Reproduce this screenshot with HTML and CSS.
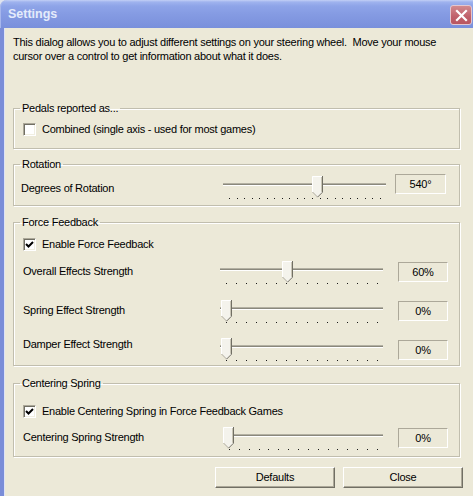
FILE: index.html
```html
<!DOCTYPE html>
<html>
<head>
<meta charset="utf-8">
<title>Settings</title>
<link rel="stylesheet" href="styles.css">
</head>
<body>
<div class="window">
  <div class="titlebar">
    <span class="title">Settings</span>
    <button class="close-btn" aria-label="Close">
      <svg width="13" height="13" viewBox="0 0 13 13"><path d="M2 2 L11 11 M11 2 L2 11" stroke="#fff" stroke-width="2.2" stroke-linecap="square"/></svg>
    </button>
  </div>
  <div class="client">
    <p class="intro">This dialog allows you to adjust different settings on your steering wheel.&nbsp; Move your mouse<br>cursor over a control to get information about what it does.</p>

    <fieldset class="group group-pedals">
      <legend>Pedals reported as...</legend>
      <div class="group-body">
        <label class="check-row"><span class="checkbox"></span>Combined (single axis - used for most games)</label>
      </div>
    </fieldset>

    <fieldset class="group group-rotation">
      <legend>Rotation</legend>
      <div class="group-body">
        <div class="slider-row slider-row-wide">
          <span class="row-label row-label-low">Degrees of Rotation</span>
          <div class="slider">
            <div class="track"></div>
            <div class="ticks"><i></i><i></i><i></i><i></i><i></i><i></i><i></i><i></i><i></i><i></i><i></i><i></i><i></i><i></i><i></i><i></i><i></i><i></i><i></i><i></i><i></i></div>
            <svg class="thumb" style="left:89px" width="11" height="22" viewBox="0 0 11 22"><polygon points="0,0 11,0 11,16 5.5,21.5 0,16" fill="#f4f3ec"/><polyline points="0.5,16 0.5,0.5 10,0.5" fill="none" stroke="#fff"/><polyline points="0.5,16 5.5,21" fill="none" stroke="#aca899"/><polyline points="10.5,0 10.5,16.2 5.5,21.2" fill="none" stroke="#716f64"/><polyline points="9.5,1 9.5,15.8" fill="none" stroke="#c9c6b6"/></svg>
          </div>
          <span class="value">540°</span>
        </div>
      </div>
    </fieldset>

    <fieldset class="group group-ff">
      <legend>Force Feedback</legend>
      <div class="group-body">
        <label class="check-row"><span class="checkbox checked"><svg width="11" height="11" viewBox="0 0 11 11"><polyline points="2,5 4.5,7.5 9,3" fill="none" stroke="#000" stroke-width="2"/></svg></span>Enable Force Feedback</label>

        <div class="slider-row row-overall">
          <span class="row-label">Overall Effects Strength</span>
          <div class="slider">
            <div class="track"></div>
            <div class="ticks"><i></i><i></i><i></i><i></i><i></i><i></i><i></i><i></i><i></i><i></i><i></i><i></i><i></i><i></i><i></i><i></i></div>
            <svg class="thumb" style="left:62px" width="11" height="22" viewBox="0 0 11 22"><polygon points="0,0 11,0 11,16 5.5,21.5 0,16" fill="#f4f3ec"/><polyline points="0.5,16 0.5,0.5 10,0.5" fill="none" stroke="#fff"/><polyline points="0.5,16 5.5,21" fill="none" stroke="#aca899"/><polyline points="10.5,0 10.5,16.2 5.5,21.2" fill="none" stroke="#716f64"/><polyline points="9.5,1 9.5,15.8" fill="none" stroke="#c9c6b6"/></svg>
          </div>
          <span class="value">60%</span>
        </div>

        <div class="slider-row row-spring">
          <span class="row-label">Spring Effect Strength</span>
          <div class="slider">
            <div class="track"></div>
            <div class="ticks"><i></i><i></i><i></i><i></i><i></i><i></i><i></i><i></i><i></i><i></i><i></i><i></i><i></i><i></i><i></i><i></i></div>
            <svg class="thumb" style="left:1px" width="11" height="22" viewBox="0 0 11 22"><polygon points="0,0 11,0 11,16 5.5,21.5 0,16" fill="#f4f3ec"/><polyline points="0.5,16 0.5,0.5 10,0.5" fill="none" stroke="#fff"/><polyline points="0.5,16 5.5,21" fill="none" stroke="#aca899"/><polyline points="10.5,0 10.5,16.2 5.5,21.2" fill="none" stroke="#716f64"/><polyline points="9.5,1 9.5,15.8" fill="none" stroke="#c9c6b6"/></svg>
          </div>
          <span class="value">0%</span>
        </div>

        <div class="slider-row row-damper">
          <span class="row-label row-label-high">Damper Effect Strength</span>
          <div class="slider">
            <div class="track"></div>
            <div class="ticks"><i></i><i></i><i></i><i></i><i></i><i></i><i></i><i></i><i></i><i></i><i></i><i></i><i></i><i></i><i></i><i></i></div>
            <svg class="thumb" style="left:1px" width="11" height="22" viewBox="0 0 11 22"><polygon points="0,0 11,0 11,16 5.5,21.5 0,16" fill="#f4f3ec"/><polyline points="0.5,16 0.5,0.5 10,0.5" fill="none" stroke="#fff"/><polyline points="0.5,16 5.5,21" fill="none" stroke="#aca899"/><polyline points="10.5,0 10.5,16.2 5.5,21.2" fill="none" stroke="#716f64"/><polyline points="9.5,1 9.5,15.8" fill="none" stroke="#c9c6b6"/></svg>
          </div>
          <span class="value value-low">0%</span>
        </div>
      </div>
    </fieldset>

    <fieldset class="group group-cs">
      <legend>Centering Spring</legend>
      <div class="group-body">
        <label class="check-row"><span class="checkbox checked"><svg width="11" height="11" viewBox="0 0 11 11"><polyline points="2,5 4.5,7.5 9,3" fill="none" stroke="#000" stroke-width="2"/></svg></span>Enable Centering Spring in Force Feedback Games</label>

        <div class="slider-row row-cs">
          <span class="row-label">Centering Spring Strength</span>
          <div class="slider slider-short">
            <div class="track"></div>
            <div class="ticks"><i></i><i></i><i></i><i></i><i></i><i></i><i></i><i></i><i></i><i></i><i></i><i></i><i></i><i></i><i></i><i></i></div>
            <svg class="thumb" style="left:0px" width="11" height="22" viewBox="0 0 11 22"><polygon points="0,0 11,0 11,16 5.5,21.5 0,16" fill="#f4f3ec"/><polyline points="0.5,16 0.5,0.5 10,0.5" fill="none" stroke="#fff"/><polyline points="0.5,16 5.5,21" fill="none" stroke="#aca899"/><polyline points="10.5,0 10.5,16.2 5.5,21.2" fill="none" stroke="#716f64"/><polyline points="9.5,1 9.5,15.8" fill="none" stroke="#c9c6b6"/></svg>
          </div>
          <span class="value">0%</span>
        </div>
      </div>
    </fieldset>

    <div class="buttons">
      <button class="btn">Defaults</button>
      <button class="btn">Close</button>
    </div>
  </div>
</div>
</body>
</html>
```

FILE: styles.css
```css
html, body {
  margin: 0;
  padding: 0;
}

body {
  width: 473px;
  height: 496px;
  overflow: hidden;
  background: #dfe3ee;
  font-family: "Liberation Sans", Arial, sans-serif;
  font-size: 11px;
  letter-spacing: -0.25px;
  color: #000;
}

.window {
  width: 473px;
  height: 496px;
  display: flex;
  flex-direction: column;
}

.titlebar {
  height: 28px;
  flex: none;
  display: flex;
  align-items: flex-start;
  justify-content: space-between;
  border-top-left-radius: 7px;
  background: linear-gradient(to bottom, #c2d0f5 0px, #9fb3ee 2px, #8ea4e8 6px, #859be3 14px, #7d93de 24px, #7990db 28px);
  box-shadow: inset 1px 0 0 #a7b7ec;
}

.title {
  margin: 7px 0 0 8px;
  font-size: 12.5px;
  line-height: 15px;
  font-weight: bold;
  letter-spacing: 0;
  color: #e4ebfb;
}

.close-btn {
  width: 22px;
  height: 20px;
  margin: 5px 1px 0 0;
  padding: 0;
  border: 1px solid #e3c7cf;
  border-radius: 3px;
  background: linear-gradient(to bottom, #d28a8e, #c0606a 60%, #b9565f);
  display: flex;
  align-items: center;
  justify-content: center;
}

.client {
  flex: 1;
  background: #ece9d8;
  border-left: 4px solid #7a8dd8;
  box-shadow: inset 1px 0 0 #dde3f6;
  padding: 7px 10px 0 9px;
}

.intro {
  margin: 0;
  line-height: 14px;
  white-space: nowrap;
}

.group {
  margin: 0 3px 0 0;
  padding: 0;
  min-inline-size: 0;
  border: 1px solid #c1beae;
  box-shadow: inset 1px 1px 0 #fff, 1px 1px 0 #fff;
}

.group legend {
  margin-left: 6px;
  padding: 0 2px;
  line-height: 14px;
  height: 14px;
}

.group-body {
  padding: 0 11px 0 9px;
}

.group-pedals { margin-top: 38px; }
.group-pedals .group-body { padding-top: 8px; padding-bottom: 12px; }

.group-rotation { margin-top: 8px; }
.group-rotation .group-body { padding-top: 5px; padding-bottom: 3px; }

.group-ff { margin-top: 9px; }
.group-ff .group-body { padding-top: 9px; padding-bottom: 1px; }

.group-cs { margin-top: 10px; }
.group-cs .group-body { padding-top: 15px; padding-bottom: 3px; }

.check-row {
  display: flex;
  align-items: center;
  gap: 6px;
  height: 13px;
  line-height: 13px;
  white-space: nowrap;
}

.checkbox {
  width: 13px;
  height: 13px;
  box-sizing: border-box;
  flex: none;
  background: #fff;
  border: 1px solid;
  border-color: #aca899 #fff #fff #aca899;
  box-shadow: inset 1px 1px 0 #716f64, inset -1px -1px 0 #f1efe2;
  display: flex;
  align-items: center;
  justify-content: center;
}

.slider-row {
  display: flex;
  align-items: flex-start;
  height: 26px;
}

.row-overall { margin-top: 10px; }
.row-spring { margin-top: 13px; }
.row-damper { margin-top: 12px; }
.row-cs { margin-top: 9px; }

.row-label {
  flex: 1;
  margin-top: 3px;
  line-height: 14px;
  white-space: nowrap;
}

.row-label-low { margin-top: 5px; margin-left: -2px; }
.row-label-high { margin-top: -1px; }

.slider {
  position: relative;
  width: 163px;
  height: 26px;
  flex: none;
}

.slider-short {
  width: 160px;
}

.track {
  margin-top: 7px;
  height: 1px;
  background: #8a887c;
  border-top: 1px solid #b3b0a2;
  border-bottom: 1px solid #fff;
}

.ticks {
  margin: 12px 5px 0 6px;
  height: 1px;
  display: flex;
  justify-content: space-between;
}

.ticks i {
  width: 1px;
  height: 1px;
  background: #1a1a1a;
}

.thumb {
  position: absolute;
  top: 0;
}

.value {
  width: 50px;
  height: 20px;
  box-sizing: border-box;
  margin-left: 15px;
  margin-top: 1px;
  border: 1px solid;
  border-color: #aca899 #fff #fff #aca899;
  text-align: center;
  line-height: 18px;
  flex: none;
}

.value-low { margin-top: 2px; }

.slider-row-wide {
  margin-right: 2px;
}

.slider-row-wide .value {
  width: 51px;
  margin-left: 9px;
  margin-top: -2px;
}

.buttons {
  display: flex;
  justify-content: flex-end;
  gap: 8px;
  margin-top: 10px;
}

.btn {
  width: 120px;
  height: 21px;
  box-sizing: border-box;
  padding: 0;
  background: #ece9d8;
  border: 1px solid;
  border-color: #fff #716f64 #716f64 #fff;
  box-shadow: inset -1px -1px 0 #aca899;
  font-family: "Liberation Sans", Arial, sans-serif;
  font-size: 11px;
  letter-spacing: -0.25px;
  color: #000;
  line-height: 19px;
}
```
